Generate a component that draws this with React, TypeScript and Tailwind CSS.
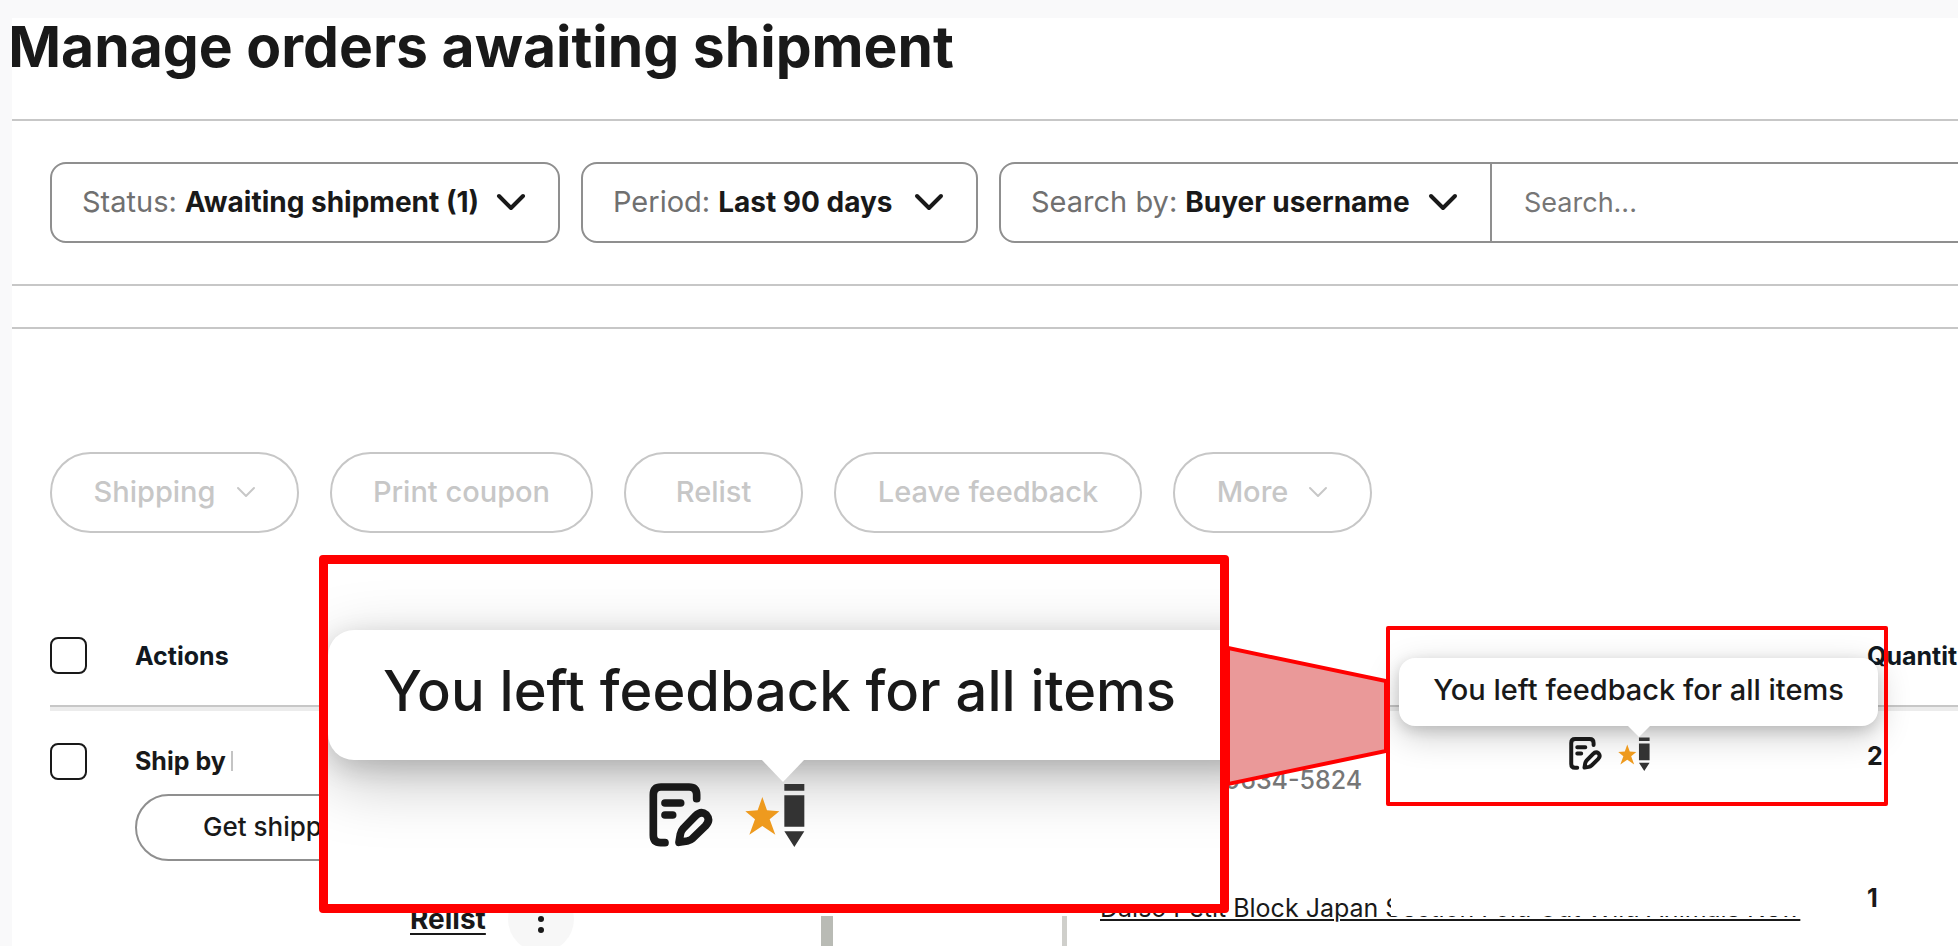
import type { ReactNode } from "react";

function Chevron({ className }: { className: string }) {
  return (
    <svg viewBox="0 0 30 18" fill="none" stroke="currentColor" strokeLinecap="round" strokeLinejoin="round" className={className} aria-hidden="true">
      <path d="M3 3l12 12L27 3" />
    </svg>
  );
}

function NoteIcon({ className }: { className: string }) {
  return (
    <svg viewBox="0 0 190 192" fill="none" stroke="#191919" strokeWidth="23" strokeLinecap="round" strokeLinejoin="round" className={className} aria-hidden="true">
      <path d="M142 47V35Q142 12 119 12H35Q12 12 12 35V157Q12 179 34 179H47" />
      <path d="M47 60H94M47 96H70" />
      <path d="M89 178L93 154Q95 144 102 136L138 99Q155 82 171 95Q185 111 168 129L130 166Q123 172 114 174Z" />
    </svg>
  );
}

function FeedbackLeftIcon({ className }: { className: string }) {
  return (
    <svg viewBox="372 130 180 192" className={className} aria-hidden="true">
      <path fill="#ee9a1e" d="M424 172L438 212L475 215L446 239L463 285L424 259L385 285L402 239L373 215L410 212Z" />
      <path fill="#333333" d="M490 133H550V153H490ZM490 167H550V261H490ZM490 275H550L520 322Z" />
    </svg>
  );
}

function FilterSelect({ id, label, value, className }: { id: string; label: string; value: string; className: string }) {
  return (
    <div className={`flex h-[81px] shrink-0 items-center border-2 border-[#8f8f8f] pr-8 pb-0.5 pl-[30px] ${className}`}>
      <label htmlFor={id} className="text-[29px] whitespace-nowrap text-[#707070]">{label}</label>
      <select id={id} className="ml-2 appearance-none bg-transparent text-[28px] font-bold text-[#191919]">
        <option>{value}</option>
      </select>
      <Chevron className="ml-auto h-[18px] w-[30px] stroke-4" />
    </div>
  );
}

function PillButton({ children, menu, className }: { children: ReactNode; menu?: boolean; className: string }) {
  return (
    <button type="button" disabled className={`flex h-[81px] shrink-0 items-center justify-center rounded-full border-2 border-[#c7c7c7] pb-0.5 text-[29px] font-medium whitespace-nowrap text-[#c7c7c7] ${className}`}>
      {children}
      {menu && <Chevron className="ml-5 h-3 w-5 stroke-3" />}
    </button>
  );
}

function RowCheckbox({ label }: { label: string }) {
  return <input type="checkbox" aria-label={label} className="block size-[37px] appearance-none rounded-lg border-2 border-[#191919] bg-white" />;
}

export default function App() {
  return (
    <div className="relative flex h-screen flex-col overflow-hidden bg-[#f9f9fa] pt-[18px] pl-3 font-[Inter,sans-serif] text-[#191919]">
      <main className="grow overflow-hidden bg-white">
        <h1 className="-ml-1 text-[57px] leading-[58px] font-bold whitespace-nowrap">Manage orders awaiting shipment</h1>

        <section aria-label="Filters" className="mt-[43px] flex gap-[21px] border-y-2 border-[#c7c7c7] py-[41px] pl-[38px]">
          <FilterSelect id="status" label="Status:" value="Awaiting shipment (1)" className="w-[510px] rounded-2xl" />
          <FilterSelect id="period" label="Period:" value="Last 90 days" className="w-[397px] rounded-2xl" />
          <div className="flex min-w-0 grow">
            <FilterSelect id="search-by" label="Search by:" value="Buyer username" className="w-[493px] rounded-l-2xl" />
            <input type="search" aria-label="Search" placeholder="Search..." className="h-[81px] min-w-0 grow border-y-2 border-[#8f8f8f] px-8 text-[27px] placeholder:text-[#767676]" />
          </div>
        </section>

        <section aria-label="Orders" className="mt-[41px] border-t-2 border-[#c7c7c7] pt-[123px] pl-[38px]">
          <div className="flex gap-[31px]">
            <PillButton menu className="w-[249px]">Shipping</PillButton>
            <PillButton className="w-[263px]">Print coupon</PillButton>
            <PillButton className="w-[179px]">Relist</PillButton>
            <PillButton className="w-[308px]">Leave feedback</PillButton>
            <PillButton menu className="w-[199px]">More</PillButton>
          </div>

          <table className="mt-[73px] w-full table-fixed border-separate border-spacing-0 text-left text-[25px] leading-9">
            <thead>
              <tr className="h-[101px] [&>th]:border-b-2 [&>th]:border-[#c7c7c7] [&>th]:p-0 [&>th]:shadow-[0_4px_0_#ececec]">
                <th className="w-[85px]"><RowCheckbox label="Select all orders" /></th>
                <th className="w-[686px] text-[#111820]">Actions</th>
                <th className="w-[279px]" />
                <th />
                <th className="w-[91px] whitespace-nowrap text-[#111820]">Quantity</th>
              </tr>
            </thead>
            <tbody className="align-top">
              <tr className="h-[173px]">
                <td className="pt-9"><RowCheckbox label="Select order" /></td>
                <td className="pt-9">
                  <p className="flex items-center gap-[5px] font-bold">Ship by <span className="h-5 w-0.5 bg-[#c4c4c4]" /></p>
                  <button type="button" className="mt-[15px] h-[67px] w-[440px] rounded-full border-2 border-[#8f8f8f] pb-0.5 pl-[66px] text-left text-[26px] font-medium">Get shipping label</button>
                </td>
                <td />
                <td className="pt-[55px] pl-[124px] font-medium text-[#767676]">0634-5824</td>
                <td className="pt-[31px] font-bold">2</td>
              </tr>
              <tr>
                <td />
                <td className="pt-[6px]">
                  <div className="flex items-center pl-[275px]">
                    <a href="#relist" className="text-[28px] font-bold underline decoration-2 underline-offset-4">Relist</a>
                    <button type="button" aria-label="More actions" className="ml-[22px] flex size-[66px] flex-col items-center justify-center gap-[5px] rounded-full bg-[#f7f7f7]">
                      <span className="size-[6px] rounded-full bg-[#191919]" />
                      <span className="size-[6px] rounded-full bg-[#191919]" />
                      <span className="size-[6px] rounded-full bg-[#191919]" />
                    </button>
                  </div>
                </td>
                <td className="pt-9">
                  <div className="h-[200px] w-[246px] border-r-[5px] border-l-[12px] border-r-[#cfcfcb] border-l-[#b9bbb5]" />
                </td>
                <td className="relative pt-[10px]">
                  <a href="#item" className="whitespace-nowrap underline decoration-2 underline-offset-2">Daiso Petit Block Japan Section Fold Out Wild Animals New</a>
                  <span className="absolute top-2 left-[291px] h-7 w-[430px] bg-white" />
                </td>
                <td className="font-bold">1</td>
              </tr>
            </tbody>
          </table>
        </section>
      </main>

      <div role="tooltip" className="absolute top-[658px] left-[1399px] flex h-[68px] w-[479px] items-center justify-center rounded-2xl bg-white pb-1 text-[29px] font-medium whitespace-nowrap shadow-[0_4px_14px_rgba(0,0,0,0.15),0_10px_34px_rgba(0,0,0,0.2)]">
        You left feedback for all items
        <svg viewBox="0 0 24 12" className="absolute top-[67px] left-[228px] h-3 w-6" aria-hidden="true"><path d="M0 0h24L12 12z" fill="#fff" /></svg>
      </div>
      <div className="absolute top-[737px] left-[1569px] flex gap-4">
        <NoteIcon className="h-[33px] w-[33px]" />
        <FeedbackLeftIcon className="h-[34px] w-[32px]" />
      </div>

      <svg viewBox="0 0 158 142" className="absolute top-[645px] left-[1228px] h-[142px] w-[158px]" aria-hidden="true">
        <path d="M0 3L158 36V106L0 139Z" fill="#ea9999" stroke="#ff0000" strokeWidth="4" />
      </svg>
      <div className="absolute top-[626px] left-[1386px] h-[180px] w-[502px] rounded-xs border-4 border-[#ff0000]" />

      <div className="absolute top-[555px] left-[319px] h-[358px] w-[910px] overflow-hidden rounded-sm border-9 border-[#ff0000] bg-white">
        <div className="mt-[66px] h-[130px] w-[960px] rounded-[26px] bg-white pl-[55px] text-[56px] leading-[122px] font-medium whitespace-nowrap shadow-[0_8px_27px_rgba(0,0,0,0.15),0_19px_66px_rgba(0,0,0,0.25)]">
          You left feedback for all items
        </div>
        <svg viewBox="0 0 44 23" className="absolute top-[195px] left-[433px] h-[23px] w-11" aria-hidden="true"><path d="M0 0h44L22 23z" fill="#fff" /></svg>
        <div className="absolute top-[219px] left-[321px] flex gap-8">
          <NoteIcon className="size-16" />
          <FeedbackLeftIcon className="h-16 w-[60px]" />
        </div>
      </div>
    </div>
  );
}
